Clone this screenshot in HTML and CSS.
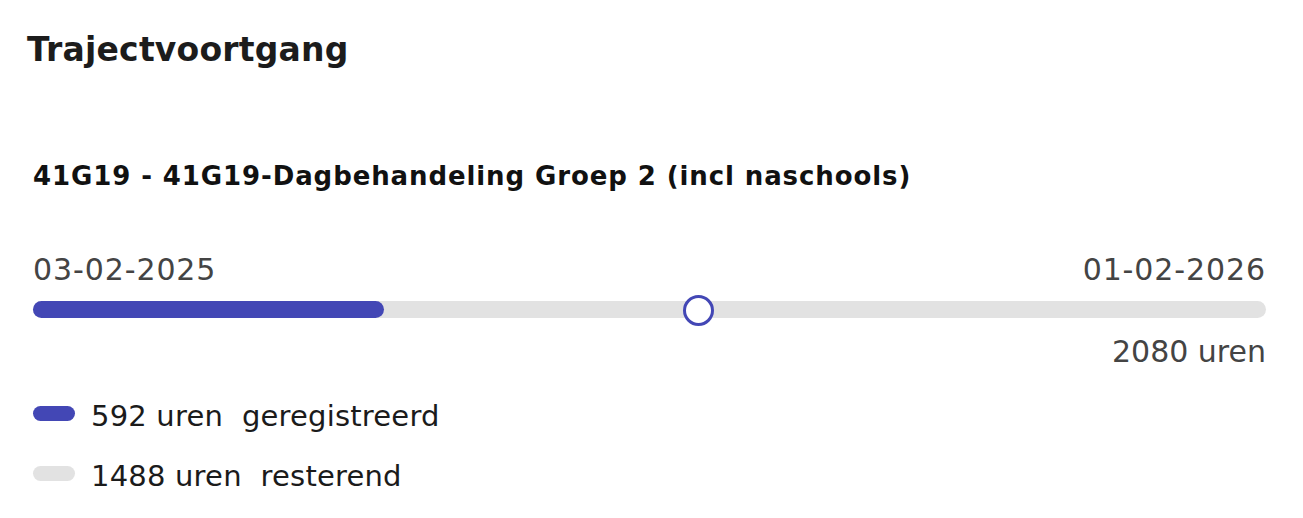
FILE: index.html
```html
<!DOCTYPE html>
<html lang="nl">
<head>
    <meta charset="UTF-8">
    <meta name="viewport" content="width=device-width, initial-scale=1.0">
    <title>Trajectvoortgang</title>
    <link rel="stylesheet" href="styles.css">
</head>
<body>
    <section class="progress-card">
        <h1>Trajectvoortgang</h1>
        <h2 class="traject-name">41G19 - 41G19-Dagbehandeling Groep 2 (incl naschools)</h2>

        <div class="timeline">
            <div class="dates">
                <span>03-02-2025</span>
                <span>01-02-2026</span>
            </div>
            <div class="track">
                <div class="fill" style="width: 28.46%;"></div>
                <div class="today" style="left: 53.9%;"></div>
            </div>
            <div class="total">2080 uren</div>
        </div>

        <ul class="legend">
            <li><span class="swatch registered"></span>592 uren&nbsp; geregistreerd</li>
            <li><span class="swatch remaining"></span>1488 uren&nbsp; resterend</li>
        </ul>
    </section>
</body>
</html>
```

FILE: styles.css
```css
* {
    margin: 0;
    padding: 0;
    box-sizing: border-box;
}
body {
    font-family: "DejaVu Sans", sans-serif;
    background-color: #ffffff;
    color: #1b1b1b;
}
.progress-card {
    padding: 30px 37px 0 33px;
}
.progress-card h1 {
    font-size: 33px;
    font-weight: 700;
    line-height: 40px;
    letter-spacing: 0.2px;
    margin-left: -6px;
    color: #1c1c1c;
}
.traject-name {
    font-size: 26px;
    font-weight: 700;
    line-height: 32px;
    letter-spacing: 0.9px;
    margin-top: 90px;
    color: #111;
}
.timeline {
    margin-top: 60px;
}
.dates {
    display: flex;
    justify-content: space-between;
    font-size: 30px;
    line-height: 36px;
    letter-spacing: 0.9px;
    color: #444;
}
.track {
    position: relative;
    height: 17px;
    margin-top: 13px;
    background-color: #e2e2e2;
    border-radius: 9px;
}
.fill {
    height: 100%;
    background-color: #4347b5;
    border-radius: 9px;
}
.today {
    position: absolute;
    top: 50%;
    width: 31px;
    height: 31px;
    margin: -15px 0 0 -15px;
    border: 3px solid #4347b5;
    border-radius: 50%;
    background-color: #fff;
}
.total {
    text-align: right;
    font-size: 30px;
    line-height: 36px;
    margin-top: 16px;
    color: #444;
}
.legend {
    list-style: none;
    margin-top: 16px;
    font-size: 29px;
    letter-spacing: 0.2px;
    color: #1b1b1b;
}
.legend li {
    display: flex;
    align-items: center;
    height: 60px;
    line-height: 60px;
}
.swatch {
    width: 42px;
    height: 15px;
    border-radius: 8px;
    margin: 0 16px 6px 0;
}
.registered {
    background-color: #4347b5;
}
.remaining {
    background-color: #e2e2e2;
}
```
